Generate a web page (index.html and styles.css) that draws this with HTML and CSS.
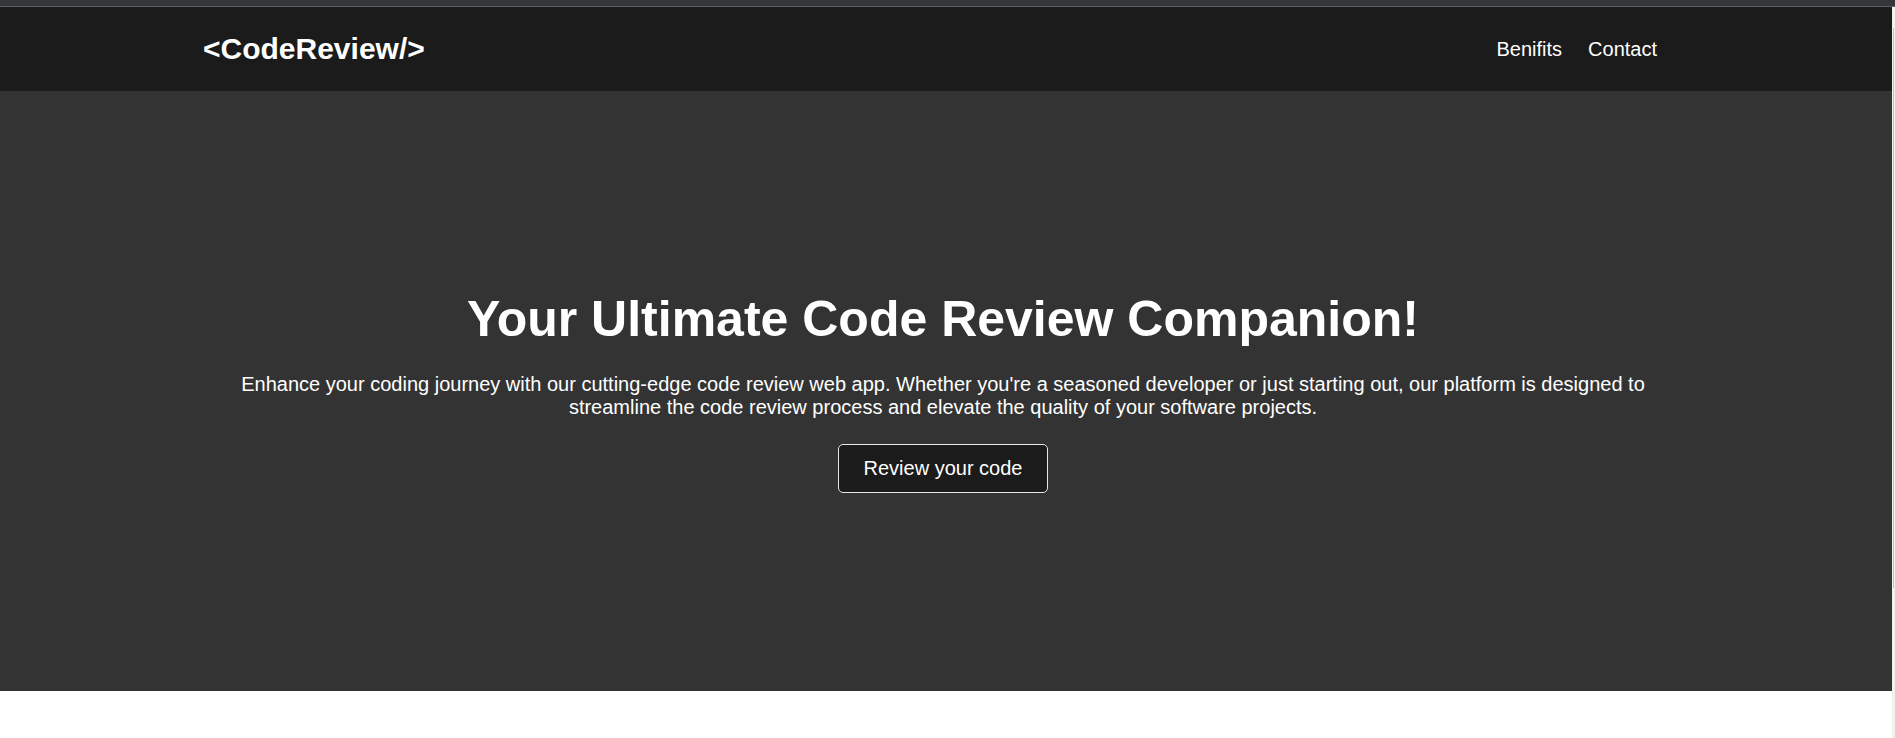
FILE: index.html
```html
<!DOCTYPE html>
<html lang="en">
<head>
<meta charset="utf-8">
<title>CodeReview</title>
<link rel="stylesheet" href="styles.css">
</head>
<body>
<div class="chrome-strip"></div>
<div class="viewport">
  <div class="page">
    <header class="navbar">
      <div class="logo">&lt;CodeReview/&gt;</div>
      <nav class="nav-links">
        <a href="#benifits">Benifits</a>
        <a href="#contact">Contact</a>
      </nav>
    </header>
    <section class="hero">
      <h1 class="hero-title">Your Ultimate Code Review Companion!</h1>
      <p class="hero-text">Enhance your coding journey with our cutting-edge code review web app. Whether you're a seasoned developer or just starting out, our platform is designed to streamline the code review process and elevate the quality of your software projects.</p>
      <button class="hero-btn">Review your code</button>
    </section>
    <div class="below"></div>
  </div>
  <div class="scrollbar"><div class="thumb"></div></div>
</div>
</body>
</html>
```
FILE: styles.css
```css
* { box-sizing: border-box; }
html, body { margin: 0; padding: 0; }
body {
  font-family: "Liberation Sans", Arial, sans-serif;
  background: #ffffff;
  color: #ffffff;
  height: 738px;
  overflow: hidden;
}
.chrome-strip {
  height: 7px;
  background: #35363a;
  border-bottom: 1px solid #5f6064;
}
.viewport {
  display: flex;
  height: 731px;
}
.page {
  flex: 1;
  display: flex;
  flex-direction: column;
}
.navbar {
  height: 84px;
  background: #1b1b1b;
  display: flex;
  align-items: center;
  justify-content: space-between;
  padding: 0 235px 0 203px;
}
.logo {
  font-size: 30px;
  font-weight: bold;
  color: #ffffff;
}
.nav-links {
  display: flex;
  gap: 26px;
}
.nav-links a {
  color: #ffffff;
  text-decoration: none;
  font-size: 20px;
}
.hero {
  height: 600px;
  background: #333333;
  display: flex;
  flex-direction: column;
  align-items: center;
  justify-content: center;
  text-align: center;
  padding-right: 6px;
}
.hero-title {
  margin: 0 0 25px;
  font-size: 50px;
  font-weight: bold;
}
.hero-text {
  margin: 0 0 25px;
  width: 75%;
  font-size: 20px;
}
.hero-btn {
  font-family: inherit;
  font-size: 20px;
  color: #ffffff;
  background: #1b1b1b;
  border: 1px solid #e6e6e6;
  border-radius: 5px;
  padding: 12px 25px;
}
.below {
  flex: 1;
  background: #ffffff;
}
.scrollbar {
  width: 3px;
  background: #f1f1f1;
  position: relative;
}
.thumb {
  position: absolute;
  left: 1px;
  top: 21px;
  width: 1px;
  height: 560px;
  background: #c1c1c1;
}
```
